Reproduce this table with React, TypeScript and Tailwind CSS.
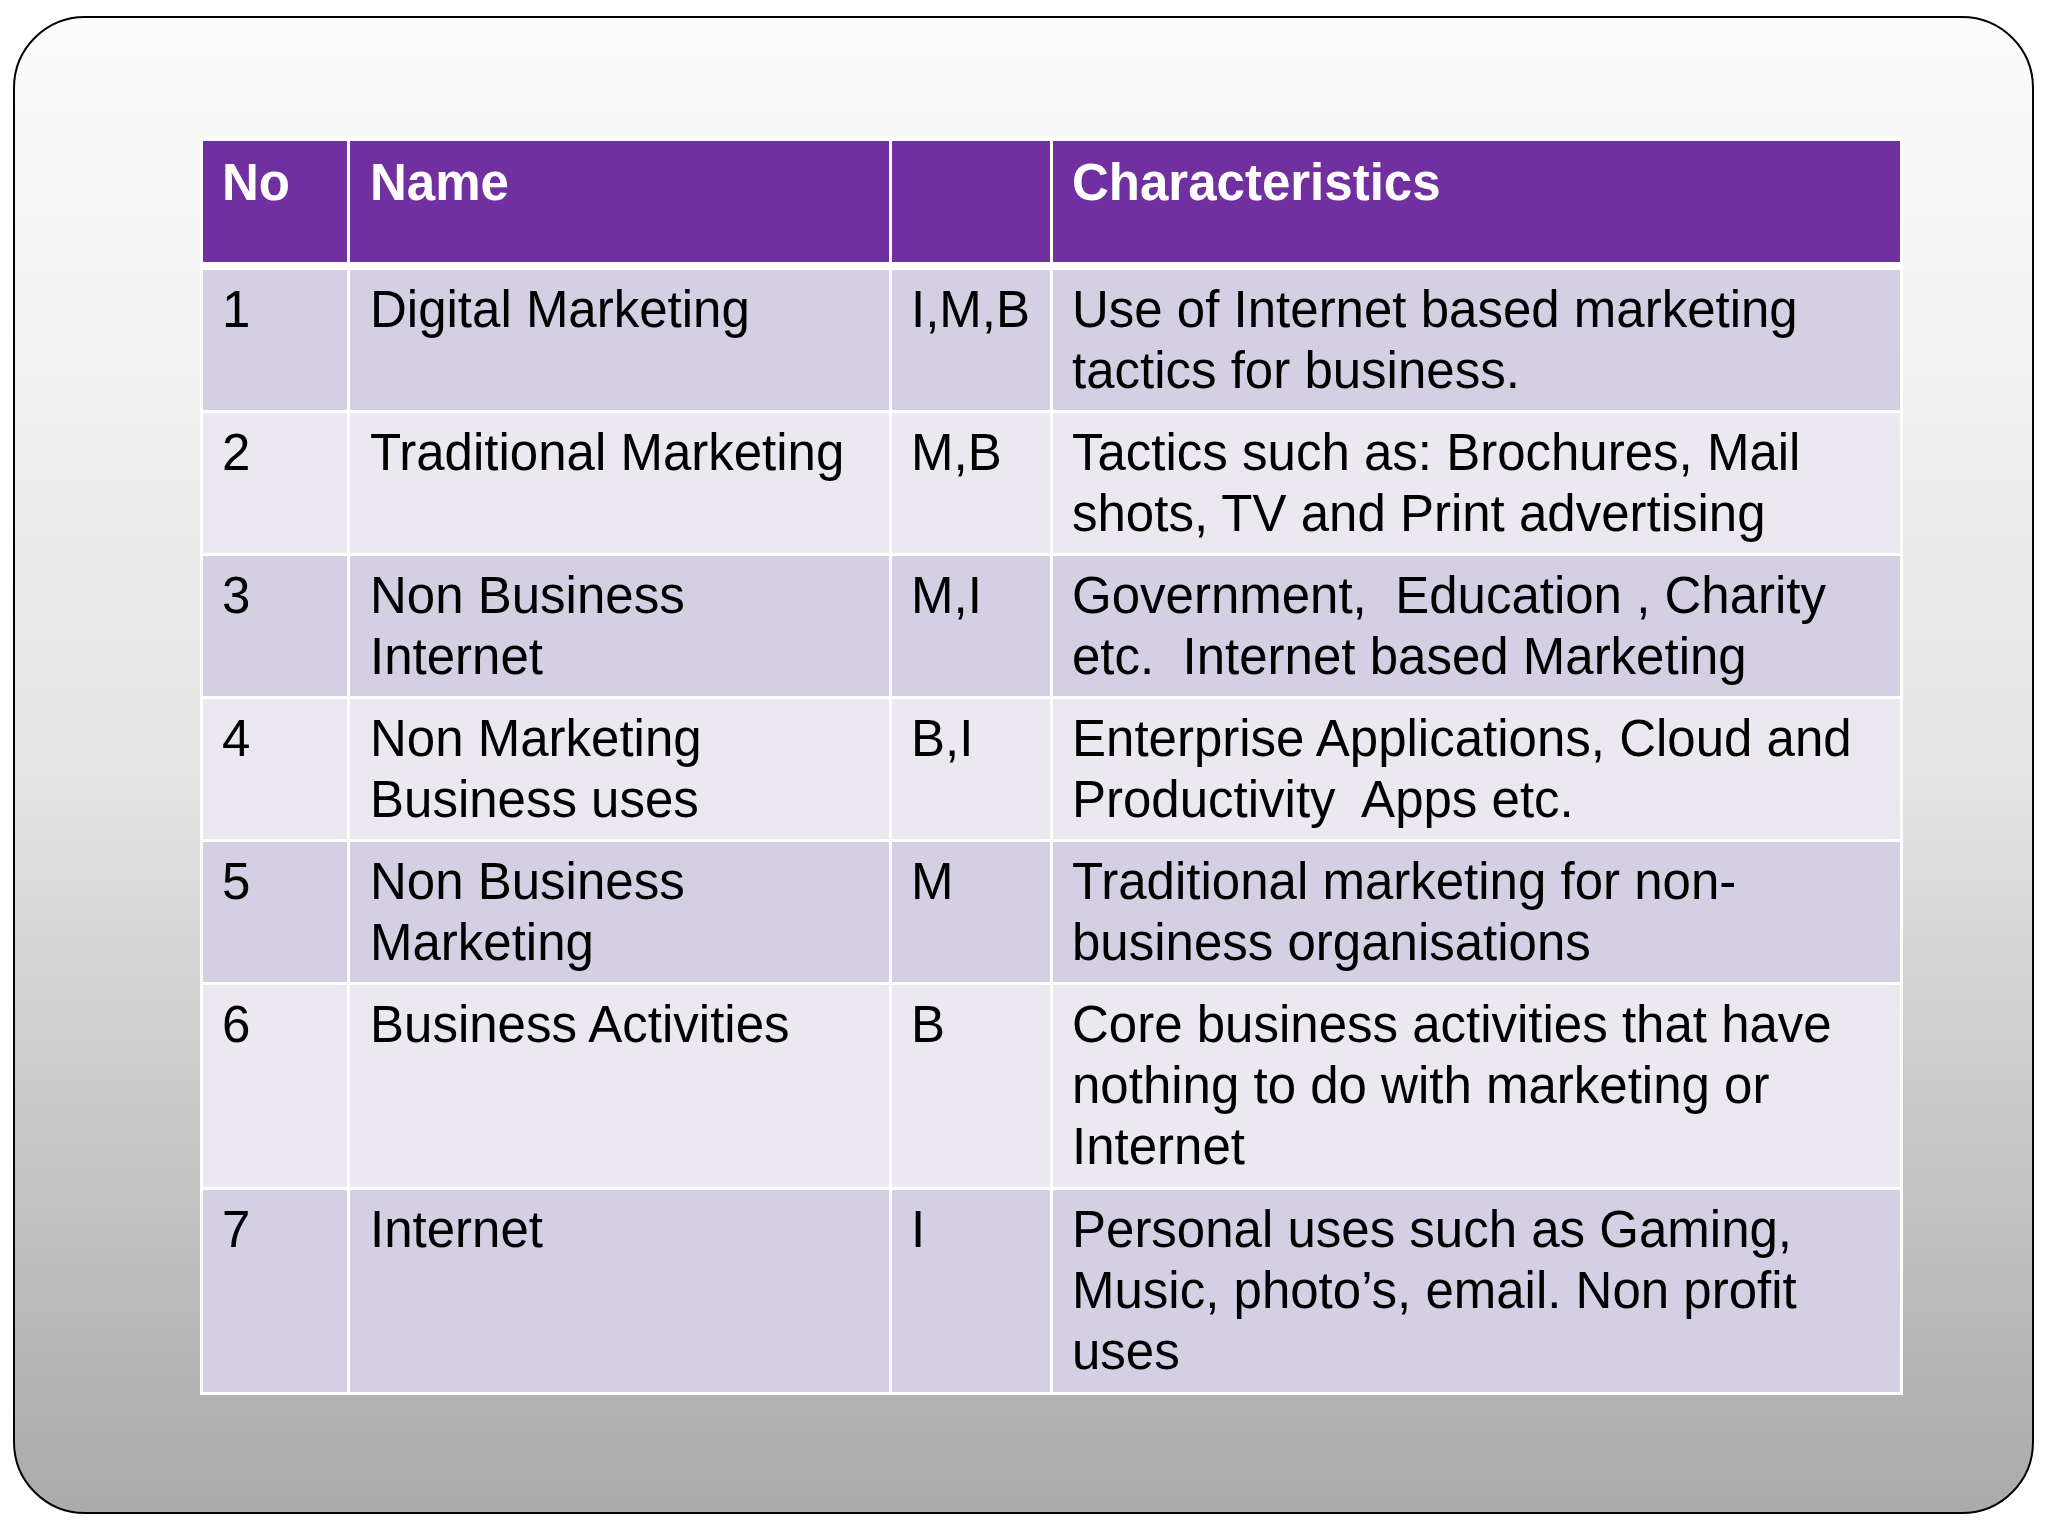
import React from "react";

type Row = {
  no: string;
  name: string[];
  code: string;
  chars: string[];
  h: string;
};

const rows: Row[] = [
  {
    no: "1",
    name: ["Digital Marketing"],
    code: "I,M,B",
    chars: ["Use of Internet based marketing", "tactics for business."],
    h: "h-[140px]",
  },
  {
    no: "2",
    name: ["Traditional Marketing"],
    code: "M,B",
    chars: ["Tactics such as: Brochures, Mail", "shots, TV and Print advertising"],
    h: "h-[140px]",
  },
  {
    no: "3",
    name: ["Non Business", "Internet"],
    code: "M,I",
    chars: ["Government,  Education , Charity", "etc.  Internet based Marketing"],
    h: "h-[140px]",
  },
  {
    no: "4",
    name: ["Non Marketing", "Business uses"],
    code: "B,I",
    chars: ["Enterprise Applications, Cloud and", "Productivity  Apps etc."],
    h: "h-[140px]",
  },
  {
    no: "5",
    name: ["Non Business", "Marketing"],
    code: "M",
    chars: ["Traditional marketing for non-", "business organisations"],
    h: "h-[140px]",
  },
  {
    no: "6",
    name: ["Business Activities"],
    code: "B",
    chars: [
      "Core business activities that have",
      "nothing to do with marketing or",
      "Internet",
    ],
    h: "h-[202px]",
  },
  {
    no: "7",
    name: ["Internet"],
    code: "I",
    chars: [
      "Personal uses such as Gaming,",
      "Music, photo\u2019s, email. Non profit",
      "uses",
    ],
    h: "h-[202px]",
  },
];

function Lines({ lines }: { lines: string[] }) {
  return (
    <>
      {lines.map((l, i) => (
        <div key={i} className="whitespace-pre">
          {l}
        </div>
      ))}
    </>
  );
}

export default function App() {
  return (
    <div className="w-[2048px] h-[1536px] bg-white pt-[16px] pl-[13px]">
      <div className="w-[2021px] h-[1498px] rounded-[72px] border-2 border-black bg-linear-to-b from-[#fcfcfc] via-[#e5e5e5] to-[#aaaaaa] pl-[185px] pt-[120px]">
        <div className="w-[1703px] bg-white p-[3px] flex flex-col gap-[3px] font-['Liberation_Sans',Arial,sans-serif] text-[51px] leading-[61px]">
          <div className="grid grid-cols-[144px_539px_158px_847px] gap-x-[3px] h-[121px] mb-[5px] text-white font-bold">
            <div className="bg-[#7030a0] pl-[19px] pt-[11px]">No</div>
            <div className="bg-[#7030a0] pl-[20px] pt-[11px]">Name</div>
            <div className="bg-[#7030a0] pl-[19px] pt-[11px]"></div>
            <div className="bg-[#7030a0] pl-[19px] pt-[11px]">Characteristics</div>
          </div>
          {rows.map((r, i) => {
            const bg = i % 2 === 0 ? "bg-[#d4cfe2]" : "bg-[#ebe8ef]";
            return (
              <div
                key={r.no}
                className={`grid grid-cols-[144px_539px_158px_847px] gap-x-[3px] text-black ${r.h}`}
              >
                <div className={`${bg} pl-[19px] pt-[9px]`}>{r.no}</div>
                <div className={`${bg} pl-[20px] pt-[9px]`}>
                  <Lines lines={r.name} />
                </div>
                <div className={`${bg} pl-[19px] pt-[9px]`}>{r.code}</div>
                <div className={`${bg} pl-[19px] pt-[9px]`}>
                  <Lines lines={r.chars} />
                </div>
              </div>
            );
          })}
        </div>
      </div>
    </div>
  );
}
